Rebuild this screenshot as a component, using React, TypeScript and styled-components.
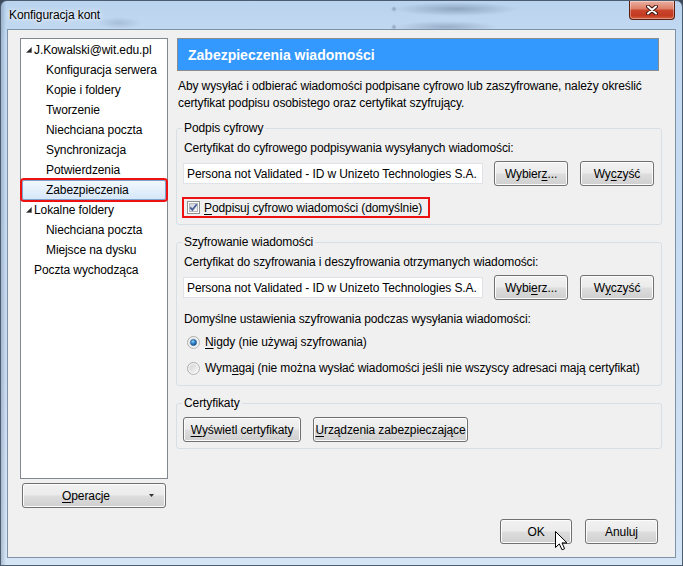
import React from "react";
import styled, { createGlobalStyle } from "styled-components";

const Global = createGlobalStyle`
  html, body { margin: 0; padding: 0; background: #3e4b5c; }
  body { font-family: "Liberation Sans", Arial, sans-serif; font-size: 12px; letter-spacing: -0.1px; color: #000; }
  #root { width: 683px; height: 566px; }
  * { box-sizing: border-box; }
`;

const Window = styled.div`
  width: 683px;
  height: 566px;
  display: flex;
  flex-direction: column;
  padding: 0 6px 7px 6px;
  border: 1px solid #4d5d70;
  border-radius: 7px 7px 0 0;
  overflow: hidden;
  background:
    radial-gradient(ellipse 62px 7px at 455px 8px, rgba(60, 80, 110, 0.35), transparent),
    radial-gradient(ellipse 52px 6px at 445px 26px, rgba(60, 80, 110, 0.3), transparent),
    radial-gradient(ellipse 22px 6px at 118px 22px, rgba(60, 80, 110, 0.18), transparent),
    radial-gradient(circle 3px at 393px 8px, rgba(40, 60, 90, 0.35), transparent),
    radial-gradient(circle 3px at 393px 26px, rgba(40, 60, 90, 0.35), transparent),
    linear-gradient(90deg, rgba(90, 110, 140, 0.35) 0, rgba(90, 110, 140, 0) 5px),
    linear-gradient(180deg, #bad3ee 0%, #c3daf2 40px, #c9dcf1 60%, #d6e5f5 100%);
`;

const TitleBar = styled.div`
  height: 28px;
  flex: none;
  display: flex;
  align-items: flex-start;
  padding-left: 2px;
`;

const Title = styled.div`
  margin-top: 6px;
  font-size: 12px;
  line-height: 16px;
  color: #000;
  text-shadow: 0 0 6px rgba(255, 255, 255, 0.95), 0 0 3px rgba(255, 255, 255, 0.9);
`;

const CloseBtn = styled.div`
  margin-left: auto;
  margin-right: 1px;
  width: 46px;
  height: 19px;
  border: 1px solid #5a1e15;
  border-top: none;
  border-radius: 0 0 4px 4px;
  background: linear-gradient(#eab0a2 0%, #de8069 42%, #c9452c 52%, #c23a20 80%, #d4603f 100%);
  box-shadow: inset 0 0 0 1px rgba(255, 255, 255, 0.35);
  display: flex;
  align-items: center;
  justify-content: center;
`;

const Client = styled.div`
  flex: 1;
  display: flex;
  flex-direction: column;
  background: #f0f0f0;
  border: 1px solid #7f91a6;
  padding: 8px 13px 13px 12px;
`;

const Main = styled.div`
  height: 470px;
  flex: none;
  display: grid;
  grid-template-columns: 148px 1fr;
  column-gap: 8px;
`;

const LeftCol = styled.div`
  display: flex;
  flex-direction: column;
  min-height: 0;
`;

const Tree = styled.div`
  flex: 1;
  background: #fff;
  border: 1px solid #828790;
  padding-top: 1px;
`;

const TreeRow = styled.div<{ $level: number; $selected?: boolean }>`
  height: 20px;
  display: flex;
  align-items: center;
  padding-left: ${(p) => 4 + p.$level * 12}px;
  margin: 0 1px;
  border-radius: 2px;
  border: 1px solid ${(p) => (p.$selected ? "#7da2ce" : "transparent")};
  background: ${(p) => (p.$selected ? "linear-gradient(#f2f8fd, #d6e7f9)" : "transparent")};
  outline: ${(p) => (p.$selected ? "2px solid #ee1111" : "none")};
  white-space: nowrap;
`;

const Toggle = styled.span`
  width: 8px;
  height: 20px;
  flex: none;
  display: flex;
  align-items: center;
  margin-left: -1px;
`;

const Button = styled.button<{ $w?: number }>`
  position: relative;
  width: ${(p) => (p.$w ? `${p.$w}px` : "auto")};
  height: 25px;
  flex: none;
  border: 1px solid #707070;
  border-radius: 3px;
  background: linear-gradient(#f2f2f2 0%, #ebebeb 48%, #dddddd 52%, #cfcfcf 100%);
  box-shadow: inset 0 0 0 1px #fcfcfc;
  font: inherit;
  letter-spacing: inherit;
  color: #000;
  padding: 0;
  display: flex;
  align-items: center;
  justify-content: center;
  cursor: default;
`;

const OpsButton = styled(Button)`
  margin: 4px 2px 0;
  padding-right: 11px;
`;

const OpsLabel = styled.span`
  flex: 1;
  text-align: center;
`;

const Acc = styled.u`
  text-decoration: underline;
  text-underline-offset: 2px;
`;

const RightCol = styled.div`
  display: flex;
  flex-direction: column;
  min-width: 0;
`;

const Header = styled.div`
  height: 33px;
  margin: 0 3px 0 1px;
  background: #3399ff;
  border: 1px solid #8a8c8e;
  display: flex;
  align-items: center;
  padding-left: 10px;
  color: #fff;
  font-weight: bold;
  font-size: 14px;
  letter-spacing: 0;
`;

const Desc = styled.p`
  margin: 7px 0 0;
  padding-left: 2px;
  line-height: 17px;
`;

const Group = styled.fieldset<{ $mt: number }>`
  margin: ${(p) => p.$mt}px 0 0;
  padding: 0 6px 6px;
  border: 1px solid #d5dfe5;
  border-radius: 3px;
  min-width: 0;
  display: flex;
  flex-direction: column;
`;

const Legend = styled.legend`
  padding: 0 2px;
  margin-left: -1px;
  line-height: 16px;
`;

const Label = styled.div<{ $mt: number }>`
  margin-top: ${(p) => p.$mt}px;
  line-height: 16px;
  padding-left: 1px;
`;

const Row = styled.div<{ $mt: number; $gap?: number }>`
  margin-top: ${(p) => p.$mt}px;
  display: flex;
  align-items: center;
  gap: ${(p) => p.$gap ?? 12}px;
`;

const CertField = styled.div`
  width: 300px;
  height: 21px;
  background: #fff;
  border: 1px solid #dfe3e8;
  padding-left: 3px;
  display: flex;
  align-items: center;
  margin-right: -1px;
  white-space: nowrap;
  overflow: hidden;
`;

const CheckWrap = styled.label`
  margin-top: 11px;
  margin-left: -1px;
  align-self: flex-start;
  height: 21px;
  display: inline-flex;
  align-items: center;
  gap: 4px;
  padding: 0 6px 0 3px;
  border: 2px solid #ee1111;
`;

const RadioRow = styled.label<{ $mt: number }>`
  margin-top: ${(p) => p.$mt}px;
  height: 22px;
  display: flex;
  align-items: center;
  gap: 5px;
  padding-left: 4px;
`;

const Footer = styled.div`
  margin-top: 11px;
  display: flex;
  justify-content: flex-end;
  gap: 13px;
  padding-right: 4px;
`;

const Cursor = styled.svg`
  position: absolute;
  left: 54px;
  top: 11px;
  pointer-events: none;
  overflow: visible;
`;

const Triangle = () => (
  <svg width="6" height="6" viewBox="0 0 6 6">
    <polygon points="5.5,0.5 5.5,5.5 0.5,5.5" fill="#262626" stroke="#595959" strokeWidth="0.6" />
  </svg>
);

const CheckBox = () => (
  <svg width="13" height="13" viewBox="0 0 13 13">
    <defs>
      <linearGradient id="cbg" x1="0" y1="0" x2="1" y2="1">
        <stop offset="0" stopColor="#cbcfd5" />
        <stop offset="1" stopColor="#f7f7f7" />
      </linearGradient>
    </defs>
    <rect x="0.5" y="0.5" width="12" height="12" fill="#fff" stroke="#8e8f8f" />
    <rect x="2.5" y="2.5" width="8" height="8" fill="url(#cbg)" stroke="#b4b8bd" />
    <path d="M3.2 6.3 L5.4 8.8 L9.8 3.2" fill="none" stroke="#4a5f97" strokeWidth="1.8" />
  </svg>
);

const Radio = ({ checked }: { checked?: boolean }) => (
  <svg width="13" height="13" viewBox="0 0 13 13">
    <defs>
      <linearGradient id="rbo" x1="0" y1="0" x2="1" y2="1">
        <stop offset="0" stopColor="#a3a3a3" />
        <stop offset="1" stopColor="#b9b9b9" />
      </linearGradient>
      <linearGradient id="rbi" x1="0" y1="0" x2="1" y2="1">
        <stop offset="0" stopColor="#cfd2d6" />
        <stop offset="1" stopColor="#f7f7f7" />
      </linearGradient>
      <radialGradient id="rdot" cx="0.4" cy="0.35" r="0.7">
        <stop offset="0" stopColor="#8fd0f8" />
        <stop offset="0.5" stopColor="#2a7fc9" />
        <stop offset="1" stopColor="#144d86" />
      </radialGradient>
    </defs>
    <circle cx="6.5" cy="6.5" r="6" fill="#f4f4f4" stroke="url(#rbo)" />
    <circle cx="6.5" cy="6.5" r="4.3" fill="url(#rbi)" />
    {checked && <circle cx="6.5" cy="6.5" r="3.1" fill="url(#rdot)" stroke="#1a4f80" strokeWidth="0.5" />}
  </svg>
);

const treeItems: { label: string; level: number; toggle?: boolean; selected?: boolean }[] = [
  { label: "J.Kowalski@wit.edu.pl", level: 0, toggle: true },
  { label: "Konfiguracja serwera", level: 1 },
  { label: "Kopie i foldery", level: 1 },
  { label: "Tworzenie", level: 1 },
  { label: "Niechciana poczta", level: 1 },
  { label: "Synchronizacja", level: 1 },
  { label: "Potwierdzenia", level: 1 },
  { label: "Zabezpieczenia", level: 1, selected: true },
  { label: "Lokalne foldery", level: 0, toggle: true },
  { label: "Niechciana poczta", level: 1 },
  { label: "Miejsce na dysku", level: 1 },
  { label: "Poczta wychodząca", level: 0 },
];

const CERT = "Persona not Validated - ID w Unizeto Technologies S.A.";

export default function App() {
  return (
    <>
      <Global />
      <Window>
        <TitleBar>
          <Title>Konfiguracja kont</Title>
          <CloseBtn>
            <svg width="12" height="10" viewBox="0 0 12 10">
              <path d="M2 1.5 L10 8.5 M10 1.5 L2 8.5" stroke="#3b1410" strokeWidth="4" strokeLinecap="round" />
              <path d="M2 1.5 L10 8.5 M10 1.5 L2 8.5" stroke="#ffffff" strokeWidth="2" strokeLinecap="round" />
            </svg>
          </CloseBtn>
        </TitleBar>
        <Client>
          <Main>
            <LeftCol>
              <Tree>
                {treeItems.map((it, i) => (
                  <TreeRow key={i} $level={it.level} $selected={it.selected}>
                    <Toggle>{it.toggle && <Triangle />}</Toggle>
                    {it.label}
                  </TreeRow>
                ))}
              </Tree>
              <OpsButton>
                <OpsLabel>
                  <Acc>O</Acc>peracje
                </OpsLabel>
                <svg width="5" height="3" viewBox="0 0 5 3">
                  <polygon points="0,0 5,0 2.5,3" fill="#333" />
                </svg>
              </OpsButton>
            </LeftCol>
            <RightCol>
              <Header>Zabezpieczenia wiadomości</Header>
              <Desc>
                Aby wysyłać i odbierać wiadomości podpisane cyfrowo lub zaszyfrowane, należy określić
                <br />
                certyfikat podpisu osobistego oraz certyfikat szyfrujący.
              </Desc>

              <Group $mt={8}>
                <Legend>Podpis cyfrowy</Legend>
                <Label $mt={4}>Certyfikat do cyfrowego podpisywania wysyłanych wiadomości:</Label>
                <Row $mt={5}>
                  <CertField>{CERT}</CertField>
                  <Button $w={74}>
                    Wybier<Acc>z</Acc>...
                  </Button>
                  <Button $w={74}>
                    Wy<Acc>c</Acc>zyść
                  </Button>
                </Row>
                <CheckWrap>
                  <CheckBox />
                  <span>
                    <Acc>P</Acc>odpisuj cyfrowo wiadomości (domyślnie)
                  </span>
                </CheckWrap>
              </Group>

              <Group $mt={9}>
                <Legend>Szyfrowanie wiadomości</Legend>
                <Label $mt={4}>Certyfikat do szyfrowania i deszyfrowania otrzymanych wiadomości:</Label>
                <Row $mt={5}>
                  <CertField>{CERT}</CertField>
                  <Button $w={74}>
                    Wybi<Acc>e</Acc>rz...
                  </Button>
                  <Button $w={74}>
                    W<Acc>y</Acc>czyść
                  </Button>
                </Row>
                <Label $mt={11}>Domyślne ustawienia szyfrowania podczas wysyłania wiadomości:</Label>
                <RadioRow $mt={4}>
                  <Radio checked />
                  <span>
                    <Acc>N</Acc>igdy (nie używaj szyfrowania)
                  </span>
                </RadioRow>
                <RadioRow $mt={4}>
                  <Radio />
                  <span>
                    Wym<Acc>a</Acc>gaj (nie można wysłać wiadomości jeśli nie wszyscy adresaci mają certyfikat)
                  </span>
                </RadioRow>
              </Group>

              <Group $mt={9}>
                <Legend>Certyfikaty</Legend>
                <Row $mt={6}>
                  <Button $w={118}>
                    <Acc>W</Acc>yświetl certyfikaty
                  </Button>
                  <Button $w={155}>
                    <Acc>U</Acc>rządzenia zabezpieczające
                  </Button>
                </Row>
              </Group>
            </RightCol>
          </Main>
          <Footer>
            <Button $w={72}>
              OK
              <Cursor width="13" height="20" viewBox="0 0 13 20">
                <path
                  d="M0.5 0.5 L0.5 16.5 L4.3 12.9 L7 18.8 L9.6 17.7 L7 11.9 L12 11.9 Z"
                  fill="#fff"
                  stroke="#000"
                  strokeWidth="1"
                  strokeLinejoin="round"
                />
              </Cursor>
            </Button>
            <Button $w={73}>Anuluj</Button>
          </Footer>
        </Client>
      </Window>
    </>
  );
}
